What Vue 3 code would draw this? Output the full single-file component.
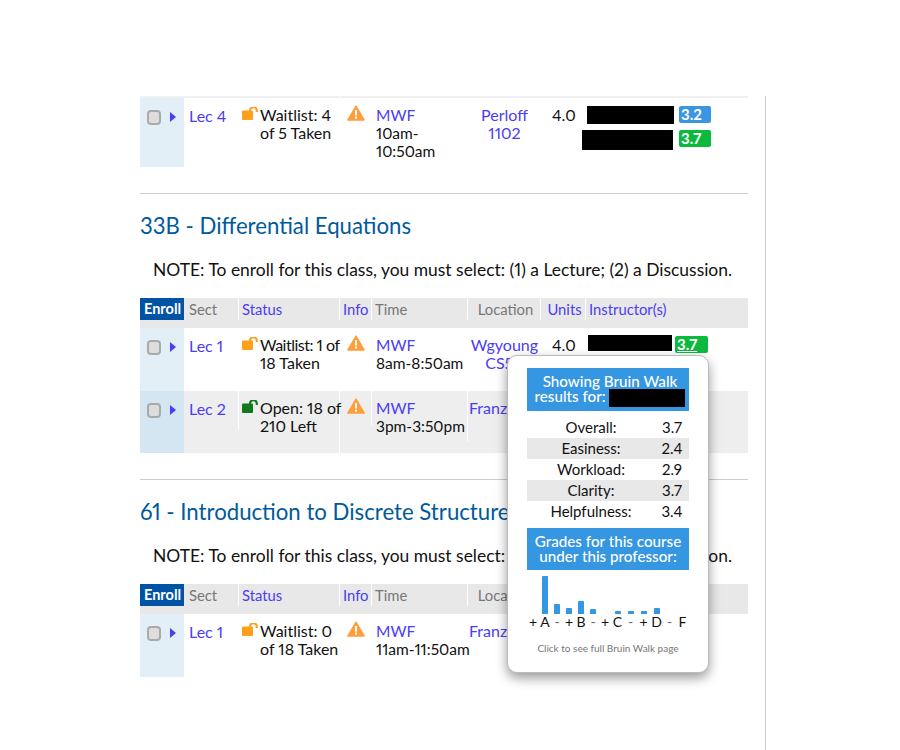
<script setup>
const grades = ['+','A','-','+','B','-','+','C','-','+','D','-','F']
const barHeights = [0,38,10,6,13,5,0,3,3,3,6,0,0]
const stats = [['Overall:','3.7'],['Easiness:','2.4'],['Workload:','2.9'],['Clarity:','3.7'],['Helpfulness:','3.4']]
const sections = [
  { title: '33B - Differential Equations', rows: [
    { sect:'Lec 1', open:false, squeeze:true, status:['Waitlist: 1 of','18 Taken'], time:'8am-8:50am', loc:['Wgyoung','CS50'], units:'4.0', inst:[{left:1,w:84,h:16,score:'3.7',cls:'green',under:true,gap:3}], pop:true },
    { sect:'Lec 2', open:true, status:['Open: 18 of','210 Left'], time:'3pm-3:50pm', loc:['Franz'], locLeft:true, units:'', inst:[], alt:true },
  ]},
  { title: '61 - Introduction to Discrete Structures', rows: [
    { sect:'Lec 1', open:false, status:['Waitlist: 0','of 18 Taken'], time:'11am-11:50am', loc:['Franz'], locLeft:true, units:'', inst:[] },
  ]},
]
const firstRow = { sect:'Lec 4', open:false, status:['Waitlist: 4','of 5 Taken'], timeLines:['10am-','10:50am'], loc:['Perloff','1102'], units:'4.0',
  inst:[{left:0,w:87,h:18,score:'3.2',cls:'blue',gap:5},{left:-5,w:91,h:20,score:'3.7',cls:'green',gap:6}] }
</script>

<template>
  <div class="panel">
    <div class="column">
      <div class="strip"><span></span><span></span></div>
      <div class="row first">
        <div class="c enroll">
          <span class="check"></span><span class="tri"></span>
        </div>
        <div class="c sect"><a>{{ firstRow.sect }}</a></div>
        <div class="c status">
          <svg class="lock" width="16" height="13" viewBox="0 0 16 13"><rect x="0" y="3.5" width="11" height="9.5" rx="1" fill="#ff9f1a"/><path d="M8 4V3.5a3.4 3.4 0 0 1 6.8 0V5" fill="none" stroke="#ff9f1a" stroke-width="2.2"/></svg>
          <div><div v-for="l in firstRow.status" :key="l">{{ l }}</div></div>
        </div>
        <div class="c info">
          <svg class="warn" width="18" height="16" viewBox="0 0 18 16"><path d="M9 1 17.2 15H.8Z" fill="#ff9d3b" stroke="#ff9d3b" stroke-width="1.4" stroke-linejoin="round"/><rect x="8" y="5" width="2" height="5.5" fill="#fff"/><rect x="8" y="11.6" width="2" height="2" fill="#fff"/></svg>
        </div>
        <div class="c time"><a>MWF</a><div v-for="l in firstRow.timeLines" :key="l">{{ l }}</div></div>
        <div class="c loc"><a v-for="l in firstRow.loc" :key="l">{{ l }}</a></div>
        <div class="c units">{{ firstRow.units }}</div>
        <div class="c inst">
          <div v-for="(i, n) in firstRow.inst" :key="n" class="inst-line" :style="{ marginLeft: i.left + 'px', gap: i.gap + 'px' }">
            <span class="redact" :style="{ width: i.w + 'px', height: i.h + 'px' }"></span>
            <span class="score" :class="i.cls">{{ i.score }}</span>
          </div>
        </div>
      </div>

      <section v-for="s in sections" :key="s.title" class="course">
        <h2>{{ s.title }}</h2>
        <p class="note">NOTE: To enroll for this class, you must select: (1) a Lecture; (2) a Discussion.</p>
        <div class="row head">
          <div class="h h-enroll">Enroll</div>
          <div class="h muted">Sect</div>
          <div class="h"><a>Status</a></div>
          <div class="h info-h"><a>Info</a></div>
          <div class="h muted">Time</div>
          <div class="h muted center">Location</div>
          <div class="h center"><a>Units</a></div>
          <div class="h"><a>Instructor(s)</a></div>
        </div>
        <div v-for="r in s.rows" :key="r.sect" class="row" :class="{ alt: r.alt }">
          <div class="c enroll">
            <span class="check"></span><span class="tri"></span>
          </div>
          <div class="c sect"><a>{{ r.sect }}</a></div>
          <div class="c status full">
            <svg v-if="r.open" class="lock" width="16" height="13" viewBox="0 0 16 13"><rect x="0" y="3.5" width="11" height="9.5" rx="1" fill="#0f7a1c"/><path d="M8 4V3.5a3.4 3.4 0 0 1 6.8 0V5" fill="none" stroke="#0f7a1c" stroke-width="2.2"/></svg>
            <svg v-else class="lock" width="16" height="13" viewBox="0 0 16 13"><rect x="0" y="3.5" width="11" height="9.5" rx="1" fill="#ff9f1a"/><path d="M8 4V3.5a3.4 3.4 0 0 1 6.8 0V5" fill="none" stroke="#ff9f1a" stroke-width="2.2"/></svg>
            <div><div v-for="(l, n) in r.status" :key="l" :class="{ squeeze: r.squeeze && n === 0 }">{{ l }}</div></div>
          </div>
          <div class="c info">
            <svg class="warn" width="18" height="16" viewBox="0 0 18 16"><path d="M9 1 17.2 15H.8Z" fill="#ff9d3b" stroke="#ff9d3b" stroke-width="1.4" stroke-linejoin="round"/><rect x="8" y="5" width="2" height="5.5" fill="#fff"/><rect x="8" y="11.6" width="2" height="2" fill="#fff"/></svg>
          </div>
          <div class="c time"><a>MWF</a><div>{{ r.time }}</div></div>
          <div class="c loc" :class="{ start: r.locLeft }"><a v-for="l in r.loc" :key="l">{{ l }}</a></div>
          <div class="c units">{{ r.units }}</div>
          <div class="c inst">
            <div v-for="(i, n) in r.inst" :key="n" class="inst-line tight" :style="{ marginLeft: i.left + 'px', gap: i.gap + 'px' }">
              <span class="redact" :style="{ width: i.w + 'px', height: i.h + 'px' }"></span>
              <span class="score" :class="[i.cls, { under: i.under }]">{{ i.score }}</span>
            </div>
            <div v-if="r.pop" class="pop">
              <div class="pop-title shifted">Showing Bruin Walk<br>results for: <span class="pop-redact"></span></div>
              <div class="stats">
                <div v-for="st in stats" :key="st[0]" class="stat">
                  <span class="stat-l">{{ st[0] }}</span><span class="stat-v">{{ st[1] }}</span>
                </div>
              </div>
              <div class="pop-title second">Grades for this course<br>under this professor:</div>
              <div class="chart">
                <div v-for="(b, n) in barHeights" :key="n" class="col">
                  <span v-if="b" class="bar" :style="{ height: b + 'px' }"></span>
                </div>
              </div>
              <div class="chart labels">
                <div v-for="(g, n) in grades" :key="n" class="col" :class="{ dash: g === '-' }">{{ g }}</div>
              </div>
              <div class="foot">Click to see full Bruin Walk page</div>
            </div>
          </div>
        </div>
      </section>
    </div>
  </div>
</template>

<style>
body { background: #fff; }
</style>

<style scoped>
.panel {
  margin-top: 96px;
  width: 766px;
  height: 654px;
  box-sizing: border-box;
  border-right: 1px solid #ccc;
  padding-left: 140px;
  overflow: hidden;
  font-family: Lato, "Open Sans", sans-serif;
  font-size: 16px;
  line-height: 18px;
  color: #111;
  font-variant-numeric: proportional-nums;
}
.column { width: 608px; }
.strip { display: flex; gap: 1px; height: 2px; }
.strip span { background: #f0f0f0; }
.strip span:first-child { width: 199px; }
.strip span:last-child { flex: 1; }
a { color: #4a3df5; display: block; }
.row {
  display: grid;
  grid-template-columns: 44px 55px 101px 32px 96px 73px 45px 162px;
  min-height: 62.5px;
  align-items: start;
}
.row.first { min-height: 69px; }
.row.alt { background: #eee; }
.c { padding-top: 8px; box-sizing: border-box; border-right: 1px solid #fff; }
.enroll {
  align-self: stretch;
  background: #e3eff7;
  border-right: 0;
  display: flex;
  align-items: flex-start;
  padding: 12px 0 0 7px;
}
.alt .enroll { background: #d4e6f1; }
.check {
  width: 14px; height: 15px;
  box-sizing: border-box;
  background: #ddd;
  border: 2px solid #aaa;
  border-radius: 4px;
}
.tri {
  margin: 2px 0 0 9px;
  width: 0; height: 0;
  border-left: 6px solid #4a3df5;
  border-top: 5px solid transparent;
  border-bottom: 5px solid transparent;
}
.sect { padding: 9px 0 0 5px; min-height: 38px; }
.status { display: flex; gap: 2px; padding-left: 3px; white-space: nowrap; min-height: 35px; }
.status.full { align-self: stretch; }
.squeeze { letter-spacing: -0.5px; }
.lock { margin-top: 1px; flex: none; }
.info { padding: 7px 0 0 7px; min-height: 35px; }
.warn { display: block; }
.time { padding-left: 4px; white-space: nowrap; min-height: 51px; font-size: 15.5px; }
.loc { text-align: center; border-right: 0; }
.loc.start { text-align: left; padding-left: 1px; }
.units { padding-left: 11px; border-right: 0; }
.inst { position: relative; padding: 8px 0 0 1px; border-right: 0; }
.inst-line { display: flex; align-items: flex-start; margin-bottom: 6px; }
.inst-line.tight { margin-top: -1px; }
.redact { background: #000; display: block; }
.score {
  width: 32px; height: 17px;
  padding-left: 2px;
  box-sizing: border-box;
  border-radius: 2px;
  color: #fff;
  font-weight: 700;
  font-size: 15px;
  line-height: 17px;
}
.tight .score { margin-top: 1px; }
.blue { background: #3a96e0; }
.green { background: #0cb93f; }
.under { text-decoration: underline; width: 33px; }

.course { margin-top: 26px; border-top: 1px solid #ccc; padding-top: 19px; }
h2 {
  margin: 0;
  font-size: 22.2px;
  line-height: 26px;
  font-weight: 400;
  color: #005a9c;
}
.note { margin: 22px 0 19px 13px; line-height: 18px; font-size: 17.45px; white-space: nowrap; }
.row.head {
  min-height: 30px;
  background: #e8e8e8;
}
.h {
  height: 22px;
  line-height: 22px;
  border-right: 1px solid #fff;
  padding-left: 3px;
  font-size: 14.8px;
  white-space: nowrap;
  box-sizing: border-box;
}
.h-enroll {
  background: #0053a5;
  color: #fff;
  font-weight: 700;
  padding-left: 4px;
  border-right: 0;
  font-size: 14.5px;
}
.muted { color: #777; }
.center { text-align: center; }
.h:nth-child(2) { padding-left: 5px; }
.h:last-child { border-right: 0; }

.pop {
  position: absolute;
  z-index: 5;
  left: -79px;
  top: 27px;
  width: 202px;
  height: 318px;
  box-sizing: border-box;
  padding: 12px 19px 0;
  background: #fff;
  border: 1px solid #bbb;
  border-radius: 10px;
  box-shadow: 0 5px 12px rgba(0, 0, 0, 0.4);
  color: #111;
}
.pop-title {
  height: 43px;
  box-sizing: border-box;
  padding-top: 6px;
  background: #3596e2;
  color: #fff;
  text-align: center;
  font-size: 15.2px;
  line-height: 15px;
  font-weight: 500;
}
.pop-title.shifted { padding-left: 4px; }
.pop-redact {
  display: inline-block;
  width: 76px;
  height: 18px;
  background: #000;
  vertical-align: -5px;
}
.stats { margin-top: 6px; }
.stat { display: flex; height: 21px; line-height: 20px; font-size: 15px; }
.stat:nth-child(even) { background: #e8e8e8; }
.stat-l { width: 128px; text-align: center; }
.stat-v { flex: 1; text-align: center; }
.second { margin-top: 6px; height: 42px; }
.chart {
  display: grid;
  grid-template-columns: repeat(7, 12px) repeat(6, 13px);
}
.chart:not(.labels) { height: 38px; margin-top: 6px; align-items: end; }
.col { display: flex; justify-content: center; }
.bar { width: 6px; background: #3596e2; border-radius: 1px 1px 0 0; }
.labels { margin-top: 1px; font-size: 14px; line-height: 14px; }
.dash { color: #666; }
.foot {
  margin-top: 12px;
  text-align: center;
  font-size: 10px;
  line-height: 14px;
  color: #777;
  white-space: nowrap;
}
</style>
